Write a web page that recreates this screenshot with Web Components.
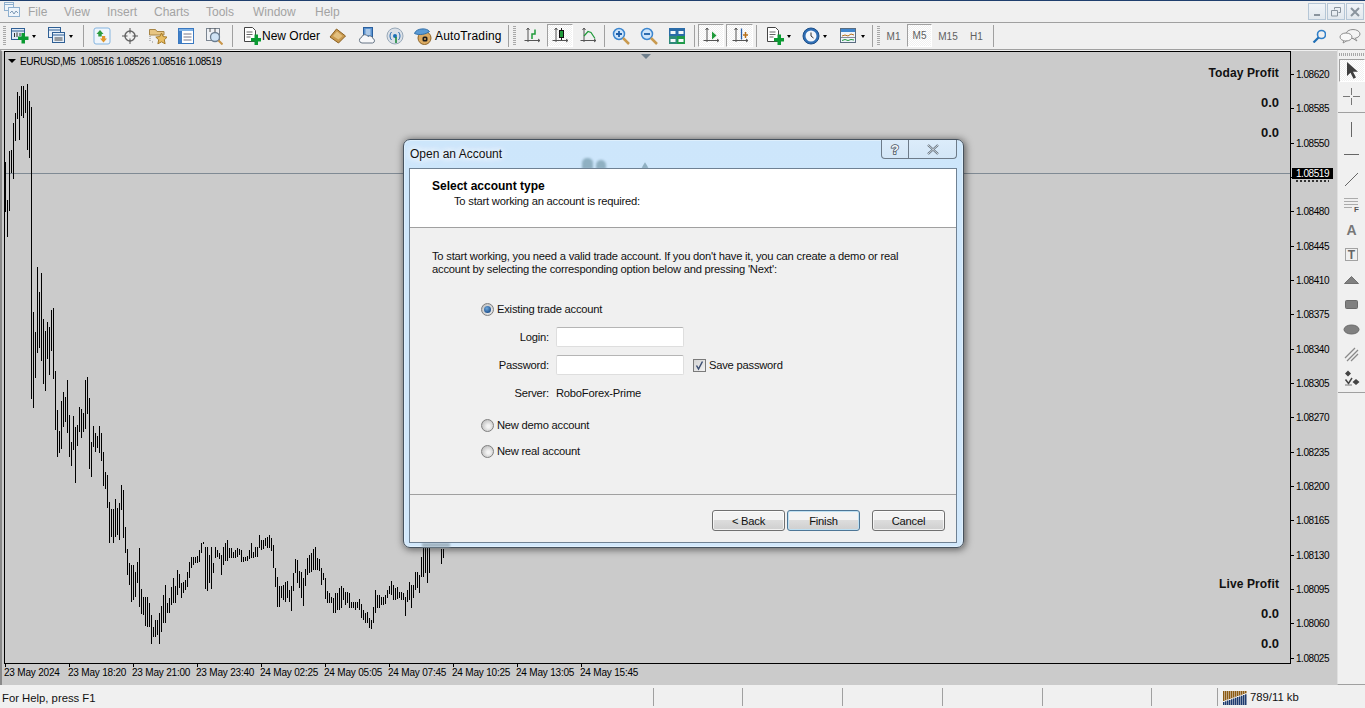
<!DOCTYPE html>
<html>
<head>
<meta charset="utf-8">
<title>Open an Account</title>
<style>
  html, body { margin: 0; padding: 0; }
  body {
    width: 1365px; height: 708px; overflow: hidden; position: relative;
    display: flex; flex-direction: column;
    background: #f0f0f0; color: #000;
    font: 12px "Liberation Sans", Arial, sans-serif;
  }
</style>
</head>
<body>
  <mt-menubar>
    <span>File</span><span>View</span><span>Insert</span><span>Charts</span><span>Tools</span><span>Window</span><span>Help</span>
  </mt-menubar>

  <mt-toolbar>
    <mt-grip w="8"></mt-grip>
    <mt-tool w="35" pad="3" icon="newchart" arrow></mt-tool>
    <mt-tool w="36" pad="5" icon="profiles" arrow></mt-tool>
    <mt-sep w="9"></mt-sep>
    <mt-tool w="28" icon="watch"></mt-tool>
    <mt-tool w="28" icon="navigator"></mt-tool>
    <mt-tool w="28" icon="folderstar"></mt-tool>
    <mt-tool w="28" icon="terminal"></mt-tool>
    <mt-tool w="28" icon="tester"></mt-tool>
    <mt-sep w="9"></mt-sep>
    <mt-tool w="86" pad="6" gap="1" icon="order">New Order</mt-tool>
    <mt-tool w="30" icon="market"></mt-tool>
    <mt-tool w="28" icon="cloud"></mt-tool>
    <mt-tool w="28" icon="signal"></mt-tool>
    <mt-tool w="97" pad="5" gap="3" track icon="auto">AutoTrading</mt-tool>
    <mt-sep w="5"></mt-sep>
    <mt-grip w="7"></mt-grip>
    <mt-tool w="28" icon="bars"></mt-tool>
    <mt-tool w="28" icon="candles" on></mt-tool>
    <mt-tool w="28" icon="line"></mt-tool>
    <mt-sep w="5"></mt-sep>
    <mt-tool w="28" icon="zoomin"></mt-tool>
    <mt-tool w="28" icon="zoomout"></mt-tool>
    <mt-tool w="28" icon="tile"></mt-tool>
    <mt-sep w="6"></mt-sep>
    <mt-tool w="28" icon="autoscroll" on></mt-tool>
    <mt-tool w="29" icon="shift" on></mt-tool>
    <mt-sep w="5"></mt-sep>
    <mt-tool w="38" pad="7" icon="indicators" arrow></mt-tool>
    <mt-tool w="37" pad="5" icon="clock" arrow></mt-tool>
    <mt-tool w="36" pad="6" icon="template" arrow></mt-tool>
    <mt-sep w="5"></mt-sep>
    <mt-grip w="6"></mt-grip>
    <mt-tool w="25" small>M1</mt-tool>
    <mt-tool w="27" small on>M5</mt-tool>
    <mt-tool w="30" small>M15</mt-tool>
    <mt-tool w="27" small>H1</mt-tool>
    <mt-sep w="6"></mt-sep>
    <mt-search-chat></mt-search-chat>
  </mt-toolbar>

  <mt-workspace>
    <mt-chart></mt-chart>
    <mt-drawbar></mt-drawbar>
  </mt-workspace>

  <mt-statusbar>For Help, press F1</mt-statusbar>

  <mt-dialog caption="Open an Account">
    <b slot="head">Select account type</b>
    <span slot="sub">To start working an account is required:</span>
    <span slot="intro">To start working, you need a valid trade account. If you don't have it, you can create a demo or real<br>account by selecting the corresponding option below and pressing 'Next':</span>
    <mt-radio slot="form" checked style="margin-top:23px">Existing trade account</mt-radio>
    <mt-field slot="form" label="Login:" style="margin-top:8px"><mt-input></mt-input></mt-field>
    <mt-field slot="form" label="Password:" style="margin-top:8px"><mt-input></mt-input><mt-check style="margin-left:9px">Save password</mt-check></mt-field>
    <mt-field slot="form" label="Server:" style="margin-top:8px">RoboForex-Prime</mt-field>
    <mt-radio slot="form" style="margin-top:12px">New demo account</mt-radio>
    <mt-radio slot="form" style="margin-top:6px">New real account</mt-radio>
    <mt-button slot="foot">&lt; Back</mt-button>
    <mt-button slot="foot" default style="margin-left:2px">Finish</mt-button>
    <mt-button slot="foot" style="margin-left:12px">Cancel</mt-button>
  </mt-dialog>

<script>
  const plus = (x, y) => `<path d="M${x - 1.5} ${y - 5}h3.5v3.5H${x + 5.5}v3.5H${x + 2}v3.5h-3.5v-3.5H${x - 5}v-3.5h3.5z" fill="#0a9a32"/>`;
  const axes = `<path d="M5 1v14M1.5 13.5H17" fill="none" stroke="#555"/><path d="M3.5 3 5 1l1.5 2M15 12l2 1.5-2 1.5" fill="none" stroke="#555"/>`;
  const doc = `<path d="M1.5.5h8l3 3v11h-11z" fill="#fff" stroke="#444"/><path d="M3.5 5h6M3.5 7.5h6M3.5 10h4" stroke="#666"/>`;

  const ICONS = {
    logo: `<rect x="1.5" y="1.5" width="9" height="8" fill="#eef4fa" stroke="#8fb0cf"/><rect x="5.5" y="6.5" width="11" height="9" fill="#eef4fa" stroke="#8fb0cf"/><path d="M7 12l2-2 2 3 2-3 2 2" fill="none" stroke="#7d99b5"/><path d="M2 3.5h8" stroke="#8fb0cf"/>`,
    newchart: `<rect x=".5" y="1.5" width="13" height="11" fill="#dfe9f5" stroke="#2f5f94"/><path d="M1 4h12" stroke="#2f5f94"/><path d="M3.5 6v4M6 5.5V10M9 6v3" stroke="#333"/>` + plus(12, 11),
    profiles: `<rect x=".5" y=".5" width="12" height="10" fill="#e6eff9" stroke="#2f5f94"/><rect x="4.5" y="5.5" width="12" height="10" fill="#e6eff9" stroke="#2f5f94"/><path d="M1 3h11M5 8h11" stroke="#2f5f94"/><path d="M6.5 11h8M6.5 13h8" stroke="#444"/>`,
    watch: `<rect x="1" y="1" width="16" height="16" rx="2" fill="#eef5fc" stroke="#85b5e0"/><path d="M7 3l3.5 4H8.7v2.5H5.3V7H3.5z" fill="#2c9c3f"/><path d="M10.5 15.5 7 11.5h2V9h3.2v2.5H14z" fill="#e0962c"/>`,
    navigator: `<circle cx="9" cy="9" r="5" fill="none" stroke="#666" stroke-width="1.4"/><path d="M9 1v5.5M9 11.5V17M1 9h5.5M11.5 9H17" stroke="#555"/>`,
    folderstar: `<path d="M.5 2.5h6l1.500 2h7v3.500H.5z" fill="#e7c583" stroke="#a88646"/><path d="M1 9v6M3 15h2" stroke="#888" stroke-dasharray="1 1"/><path d="M12.500 6l1.700 3.600 4 .5-2.900 2.700.8 4-3.600-2-3.600 2 .8-4-2.900-2.700 4-.5z" fill="#e8bd62" stroke="#a57a26"/>`,
    terminal: `<rect x="1.500" y="1.500" width="15" height="15" fill="#fff" stroke="#3a78c0"/><rect x="2" y="2" width="14" height="2" fill="#7fb2e5"/><rect x="2" y="4" width="3" height="12" fill="#3f7fc9"/><path d="M6.500 7h8M6.500 10h8M6.500 13h8" stroke="#778"/>`,
    tester: `<rect x="1.500" y="1.500" width="13" height="12" fill="#eef1f5" stroke="#7b8591"/><path d="M5 1v4M10 1v4" stroke="#555"/><circle cx="10" cy="10" r="4.500" fill="#cfe3f5" stroke="#6a7d90" stroke-width="1.300"/><path d="M13.500 13.500l4 4" stroke="#c9964a" stroke-width="2"/>`,
    order: doc + plus(13, 12.5),
    market: `<path d="M1 10 7.500 2l9 7-7 7z" fill="#c99a4f" stroke="#8a5f20"/><path d="M4 9l4-4.500 5.500 4.500-4 3.500z" fill="#e3c07f"/>`,
    cloud: `<rect x="5.500" y=".5" width="9" height="9" fill="#5b93d0" stroke="#2a5f9e"/><path d="M7.500 3h5M7.500 5h5M7.500 7h5" stroke="#fff"/><path d="M4 16a2.800 2.800 0 0 1-.5-5.500A3.500 3.500 0 0 1 10 9.500a3 3 0 0 1 4.800 2A2.300 2.300 0 0 1 14.500 16z" fill="#f7f8fa" stroke="#667585"/>`,
    signal: `<circle cx="9" cy="9" r="8" fill="#dbe1e8" stroke="#98a8b8"/><path d="M5.500 13a6 6 0 0 1 0-8M12.500 5a6 6 0 0 1 0 8" fill="none" stroke="#2b6cb0"/><circle cx="9" cy="9" r="2" fill="#1c6fb5"/><path d="M10 10v6" stroke="#1b8a3a" stroke-width="1.600"/>`,
    auto: `<circle cx="10.500" cy="11" r="6.500" fill="#dcab62" stroke="#8d6428"/><path d="M.5 6.500C2 1 13 .5 15.500 4.500 12 7.500 5 8.500.5 6.500z" fill="#5b9bd5" stroke="#2f6ea8"/><rect x="8.500" y="9.500" width="5" height="5" rx="1.500" fill="#1d1d1d"/><circle cx="11" cy="12" r="1" fill="#dcab62"/>`,
    bars: axes + `<path d="M9 12V7h3V2.500" fill="none" stroke="#1f9a3a" stroke-width="1.500"/>`,
    candles: axes + `<path d="M10.500 1v12" stroke="#222"/><rect x="8.500" y="3.500" width="4" height="7" fill="#1f9a3a" stroke="#111"/>`,
    line: axes + `<path d="M5 9 9 4.500l3 1 4 6" fill="none" stroke="#1f9a3a" stroke-width="1.200"/>`,
    zoomin: `<circle cx="7" cy="7" r="5.500" fill="#cfe5fa" stroke="#3c86cf" stroke-width="1.500"/><path d="M4 7h6M7 4v6" stroke="#1f5fa8" stroke-width="1.800"/><path d="M11 11l6 6" stroke="#c99a4f" stroke-width="2.500"/>`,
    zoomout: `<circle cx="7" cy="7" r="5.500" fill="#cfe5fa" stroke="#3c86cf" stroke-width="1.500"/><path d="M4 7h6" stroke="#1f5fa8" stroke-width="1.800"/><path d="M11 11l6 6" stroke="#c99a4f" stroke-width="2.500"/>`,
    tile: `<rect x="1" y="1" width="16" height="16" fill="#2b6ca8"/><rect x="9" y="9" width="8" height="8" fill="#1f9a4a"/><rect x="1" y="9" width="8" height="8" fill="#2f8a7a"/><rect x="2.500" y="4" width="5" height="3" fill="#f4f7fa"/><rect x="10.500" y="4" width="5" height="3" fill="#f4f7fa"/><rect x="2.500" y="12" width="5" height="3" fill="#f4f7fa"/><rect x="10.500" y="12" width="5" height="3" fill="#f4f7fa"/>`,
    autoscroll: axes + `<path d="M10 4.500l4.500 4-4.500 4z" fill="#1f9a3a"/>`,
    shift: axes + `<path d="M10.500 1.500v11" stroke="#2a5fa8" stroke-width="1.300"/><path d="M14.500 5v6M12 8h5" stroke="#b8701a" stroke-width="1.500"/>`,
    indicators: doc + plus(13, 12.5),
    clock: `<circle cx="9" cy="9" r="8" fill="#2f6fb5" stroke="#1d4f8a"/><circle cx="9" cy="9" r="5.500" fill="#f4f7fb"/><path d="M9 5.500V9l2.500 2" fill="none" stroke="#333"/>`,
    template: `<rect x=".5" y="1.500" width="15" height="14" fill="#eef4fb" stroke="#5a6d80"/><rect x="1" y="2" width="14" height="3" fill="#3f86cf"/><path d="M2 9l3-1 3 1 3-2 3 1" fill="none" stroke="#b8701a"/><path d="M1 10.500h14" stroke="#889"/><path d="M2 13.500l3-1 3 1 3-1 3 .5" fill="none" stroke="#1f9a3a"/>`,
    search: `<circle cx="9.500" cy="5.500" r="4" fill="none" stroke="#2f7fc9" stroke-width="1.600"/><path d="M6.500 8.500l-5 5" stroke="#1f6fb5" stroke-width="2.200"/>`,
    chat: `<ellipse cx="14" cy="6" rx="7" ry="4.500" fill="#f4f4f4" stroke="#8d8d8d"/><path d="M16 10l2 3-4-2.500" fill="#f4f4f4" stroke="#8d8d8d"/><ellipse cx="7" cy="9" rx="6" ry="4" fill="#f8f8f8" stroke="#8d8d8d"/><path d="M5 12.500l-1 2.500 3.500-2" fill="#f8f8f8" stroke="#8d8d8d"/>`,
    cursor: `<path d="M4 1v14l3.500-3.200 3 6 2.500-1.200-3-5.800H15z" fill="#3f3f3f"/>`,
    cross: `<path d="M9.500 1v7M9.500 11v7M1 9.500h7M11 9.500h7" stroke="#777"/>`,
    vline: `<path d="M9.500 2v15" stroke="#666"/>`,
    hline: `<path d="M2 9.500h15" stroke="#666"/>`,
    trend: `<path d="M3 16 16 3" stroke="#666"/>`,
    fibo: `<path d="M2.500 3.500h14M2.500 6.500h14M2.500 9.500h14M2.500 12.500h8" stroke="#666" stroke-dasharray="1 1"/><text x="12" y="17" font-size="8" font-weight="700" font-family="Liberation Sans" fill="#555">F</text>`,
    alabel: `<text x="9.500" y="15" text-anchor="middle" font-size="14" font-family="Liberation Sans" font-weight="700" fill="#777">A</text>`,
    tlabel: `<rect x="3.500" y="3.500" width="12" height="12" fill="none" stroke="#555" stroke-dasharray="1 1"/><text x="9.500" y="14" text-anchor="middle" font-size="12" font-weight="700" font-family="Liberation Sans" fill="#666">T</text>`,
    triangle: `<path d="M2.500 13.500 9.500 6.500l7 7z" fill="#808080" stroke="#707070"/>`,
    rectangle: `<rect x="3.500" y="5.500" width="12" height="8" rx="1" fill="#808080" stroke="#6a6a6a"/>`,
    ellipse: `<ellipse cx="9.500" cy="9.500" rx="7.500" ry="4.500" fill="#808080" stroke="#6a6a6a"/>`,
    hatch: `<path d="M3 13 13 3M5 16 16 5M9 16l7-7" stroke="#8a8a8a" stroke-width="1.300"/>`,
    arrows: `<path d="M6 .5l3 3-3 3-3-3zM14 9l3.500 3-3.500 3-3.500-3z" fill="#444"/><path d="M3.500 9.500l3 4 3.500-5.500" fill="none" stroke="#444" stroke-width="1.500"/><path d="M3 15h7" stroke="#777"/>`
  };

  class Icon extends HTMLElement {
    connectedCallback() {
      const size = this.getAttribute("size") || 18;
      const vb = this.getAttribute("vb") || "0 0 18 18";
      this.attachShadow({ mode: "open" }).innerHTML = `
        <style>:host { display: inline-flex; flex: none; } svg { display: block; }</style>
        <svg xmlns="http://www.w3.org/2000/svg" width="${size}" height="${this.getAttribute("h") || size}" viewBox="${vb}">${ICONS[this.getAttribute("name")] || ""}</svg>`;
    }
  }

  class MenuBar extends HTMLElement {
    constructor() {
      super();
      this.attachShadow({ mode: "open" }).innerHTML = `
        <style>
          :host {
            display: grid; flex: none; box-sizing: border-box; height: 23px;
            grid-template-columns: 28px 36px 43px 47px 52px 47px 62px 40px 1fr auto;
            align-items: center; background: #f0f0f0; color: #a3a3a3;
            border-top: 1px solid #1f3f6e; border-bottom: 1px solid #a0a0a0;
            font-size: 12px;
          }
          .logo { padding-left: 3px; }
          .win { grid-column: 10; display: flex; gap: 1px; padding-right: 1px; }
          .win i {
            display: flex; align-items: center; justify-content: center; width: 18px; height: 17px;
            box-sizing: border-box; border: 1px solid #b5c6d6; background: linear-gradient(#f0f4f8, #e2e8ee);
          }
        </style>
        <div class="logo"><mt-icon name="logo"></mt-icon></div>
        <slot></slot>
        <div class="win">
          <i><svg width="10" height="10"><rect x="2" y="7" width="6" height="2" fill="#8a949e"/></svg></i>
          <i><svg width="10" height="10"><path d="M3.500 2.500V.5h6v5h-2M.5 3.500h6v5.500h-6z" fill="none" stroke="#8a949e"/></svg></i>
          <i><svg width="10" height="10"><path d="M1 1l8 8M9 1 1 9" stroke="#8a949e" stroke-width="2"/></svg></i>
        </div>`;
    }
  }

  class ToolBar extends HTMLElement {
    constructor() {
      super();
      this.attachShadow({ mode: "open" }).innerHTML = `
        <style>
          :host {
            display: flex; flex: none; box-sizing: border-box; height: 27px;
            background: #f0f0f0; border-bottom: 1px solid #a0a0a0;
            align-items: stretch;
          }
        </style>
        <slot></slot>`;
    }
  }

  class Tool extends HTMLElement {
    connectedCallback() {
      const pad = this.getAttribute("pad");
      const icon = this.getAttribute("icon");
      this.attachShadow({ mode: "open" }).innerHTML = `
        <style>
          :host { display: block; flex: none; width: ${this.getAttribute("w")}px; font-size: 12px; color: #000; }
          :host([small]) { font-size: 10px; color: #606060; }
          :host([track]) .t { letter-spacing: .16px; }
          .b {
            display: flex; align-items: center; height: 100%; box-sizing: border-box;
            justify-content: ${pad ? "flex-start" : "center"};
            padding-left: ${pad || 0}px;
          }
          :host([on]) .b {
            height: 23px; margin: 1px 1px 0;
            border: 1px solid; border-color: #a0a0a0 #fff #fff #a0a0a0;
            background: repeating-conic-gradient(#fff 0 25%, #f0f0f0 0 50%) 0 0 / 2px 2px;
          }
          .t { margin-left: ${this.getAttribute("gap") || 0}px; white-space: nowrap; }
          .a { width: 0; height: 0; margin-left: 3px; border: 3px solid transparent; border-top: 3px solid #000; border-bottom: 0; border-left-width: 2.5px; border-right-width: 2.5px; }
        </style>
        <div class="b">
          ${icon ? `<mt-icon name="${icon}"></mt-icon>` : ""}
          <span class="t"><slot></slot></span>
          ${this.hasAttribute("arrow") ? '<i class="a"></i>' : ""}
        </div>`;
    }
  }

  class Sep extends HTMLElement {
    connectedCallback() {
      this.attachShadow({ mode: "open" }).innerHTML = `
        <style>
          :host { display: flex; flex: none; width: ${this.getAttribute("w")}px; justify-content: center; align-items: center; }
          i { width: 1px; height: 22px; background: #a0a0a0; }
        </style><i></i>`;
    }
  }

  class Grip extends HTMLElement {
    connectedCallback() {
      this.attachShadow({ mode: "open" }).innerHTML = `
        <style>
          :host { display: flex; flex: none; width: ${this.getAttribute("w")}px; justify-content: center; align-items: center; }
          i { width: 3px; height: 20px; background: repeating-linear-gradient(#a8a8a8 0 1px, transparent 1px 2px); }
        </style><i></i>`;
    }
  }

  class SearchChat extends HTMLElement {
    constructor() {
      super();
      this.attachShadow({ mode: "open" }).innerHTML = `
        <style>
          :host { display: flex; flex: 1; justify-content: flex-end; align-items: center; padding-right: 4px; gap: 13px; }
        </style>
        <mt-icon name="search" size="14" h="14" vb="0 0 14 14"></mt-icon>
        <mt-icon name="chat" size="22" h="16" vb="0 0 22 16"></mt-icon>`;
    }
  }

  class WorkSpace extends HTMLElement {
    constructor() {
      super();
      this.attachShadow({ mode: "open" }).innerHTML = `
        <style>:host { display: flex; flex: 1; min-height: 0; }</style>
        <slot></slot>`;
    }
  }

  // bars as [first top, first bottom, second top, ...], every second pixel, in 3x crop units
  const TOP_BARS = [336,485, 450,560, 302,482, 300,370, 220,387, 188,272, 125,207, 137,270, 108,197, 108,203, 120,190, 102,300, 152,323];
  const MID_BARS = [0,476, 216,503, 276,414, 82,338, 155,323, 100,362, 238,431, 272,452, 247,356, 262,404, 210,332, 205,416, 394,570, 510,650, 573,638, 483,626, 457,560, 471,545, 420,578, 525,650, 606,677, 528,630, 560,730, 555,617, 501,575, 507,593, 518,575, 420,567, 412,521, 474,686, 606,710, 558,622, 579,635, 588,625, 558,638, 579,662, 636,737, 696,746, 705,803, 786,909, 807,891, 807,909, 778,891, 804,885, 790,900, 735,810, 750,894];
  const LOW_BARS = [20,98, 87,165, 130,195, 135,245, 135,240, 155,230, 125,190, 85,260, 207,283, 230,285, 230,318, 232,320, 250,320, 285,372, 320,350, 300,350, 300,345, 280,372, 258,335, 225,310, 195,310, 250,280, 235,280, 200,255, 175,250, 197,248, 150,225, 163,205, 190,233, 185,218, 180,210, 155,200, 125,175, 112,145, 110,135, 110,130, 108,128, 90,125, 70,100, 65,73, 82,207, 82,212, 105,190, 80,207, 130,160, 80,115, 90,110, 100,118, 105,165, 82,135, 70,122, 60,122, 85,115, 85,115, 95,115, 90,115, 85,110, 88,105, 90,125, 112,125, 110,122, 108,122, 90,118, 70,115, 95,115, 82,112, 80,110, 45,85, 60,90, 60,88, 55,78, 50,85, 45,85, 55,92, 75,143, 143,200, 170,260, 197,260, 197,235, 195,240, 185,245, 183,235, 210,245, 197,272, 160,212, 117,160, 120,190, 153,205, 155,235, 175,257, 148,197, 115,165, 105,160, 100,155, 87,150, 82,150, 115,150, 117,152, 143,195, 160,180, 175,238, 213,250, 220,250, 230,250, 235,280, 220,278, 218,270, 205,270, 198,265, 203,240, 217,255, 215,250, 218,265, 245,265, 245,265, 245,270, 245,265, 237,270, 252,295, 270,300, 280,310, 275,310, 295,325, 300,327, 260,310, 210,278, 225,265, 225,265, 230,255, 232,255, 225,253, 210,235, 197,222, 183,225, 195,240, 205,240, 200,237, 215,235, 215,240, 220,240, 232,287, 210,245, 185,240, 195,265, 195,235, 155,210, 155,205, 165,220, 110,172, 85,170, 85,160, 85,190, 85,160];

  function barPath() {
    let d = "";
    const add = (list, x0, base) => {
      for (let i = 0; i < list.length; i += 2) {
        const x = x0 + i + 0.5;
        d += `M${x} ${Math.round(base + list[i] / 3)}V${Math.round(base + list[i + 1] / 3)}`;
      }
    };
    add(TOP_BARS, 5, 50);
    add(MID_BARS, 31, 240);
    add(LOW_BARS, 125, 520);
    d += "M31.500 107V240M441.500 549V564M443.500 549V558";
    return d;
  }

  // 1.08515 lies under the current price box, only a sliver of it shows
  const PRICES = ["1.08620", "1.08585", "1.08550", "", "1.08480", "1.08445", "1.08410", "1.08375", "1.08340", "1.08305", "1.08270", "1.08235", "1.08200", "1.08165", "1.08130", "1.08095", "1.08060", "1.08025"];
  const DATES = ["23 May 2024", "23 May 18:20", "23 May 21:00", "23 May 23:40", "24 May 02:25", "24 May 05:05", "24 May 07:45", "24 May 10:25", "24 May 13:05", "24 May 15:45"];

  class Chart extends HTMLElement {
    constructor() {
      super();
      this.attachShadow({ mode: "open" }).innerHTML = `
        <style>
          :host {
            display: grid; flex: 1; min-width: 0; box-sizing: border-box;
            grid-template-columns: 1287px 1fr; grid-template-rows: 613px 1fr;
            background: #cbcbcb; padding-left: 2px;
            border-left: 2px solid #8a8a8a; border-top: 1px solid #f0f0f0;
            font-size: 10px; color: #000;
          }
          .plot {
            position: relative; box-sizing: border-box; border: 1px solid #000;
            display: flex; flex-direction: column; justify-content: space-between;
            padding: 6px 11px 4px 0; align-items: stretch;
          }
          svg.bars { position: absolute; left: 0; top: 0; }
          .row { position: relative; display: flex; justify-content: space-between; align-items: flex-start; }
          .legend { display: flex; align-items: center; margin: -2px 0 0 3px; height: 10px; white-space: pre; letter-spacing: -.38px; }
          .legend i { width: 0; height: 0; margin-right: 4px; border: 4px solid transparent; border-top: 4px solid #000; border-bottom: 0; }
          .end { justify-content: flex-end; }
          .mark { position: absolute; left: 636px; top: 2px; width: 0; height: 0; border: 5px solid transparent; border-top: 5px solid #6f7f8c; border-bottom: 0; }
          .axis { position: relative; padding-top: 6.3px; letter-spacing: -.45px; }
          .axis div { display: flex; align-items: center; height: 34.35px; }
          .axis div::before { content: ""; width: 3px; height: 1px; background: #000; margin-right: 2px; }
          .axis s { display: block; width: 33px; height: 2px; margin-top: 6px; background: repeating-linear-gradient(90deg, #333 0 2px, transparent 2px 4px); }
          .now {
            position: absolute; left: 1px; top: 117px; width: 41px; height: 11px; line-height: 11px;
            background: #000; color: #fff; text-align: center;
          }
          .dates { display: flex; grid-column: 1 / 3; }
          .dates span {
            width: 64px; padding-top: 3px; white-space: nowrap; letter-spacing: -.2px;
            background: linear-gradient(#000, #000) 1px 0 / 1px 3px no-repeat;
          }
        </style>
        <div class="plot">
          <svg class="bars" width="1285" height="611" viewBox="5 52 1285 611" shape-rendering="crispEdges">
            <path d="M5 173.500H1290" stroke="#7f8a94" fill="none"/>
            <path d="${barPath()}" stroke="#000" fill="none"/>
          </svg>
          <i class="mark"></i>
          <div class="row">
            <div class="legend"><i></i>EURUSD,M5  1.08516 1.08526 1.08516 1.08519</div>
            <mt-profit title="Today Profit"></mt-profit>
          </div>
          <div class="row end"><mt-profit title="Live Profit"></mt-profit></div>
        </div>
        <div class="axis">
          ${PRICES.map(p => `<div>${p || "<s></s>"}</div>`).join("")}
          <span class="now">1.08519</span>
        </div>
        <div class="dates">${DATES.map(d => `<span>${d}</span>`).join("")}</div>`;
    }
  }

  class Profit extends HTMLElement {
    connectedCallback() {
      this.attachShadow({ mode: "open" }).innerHTML = `
        <style>
          :host { display: block; position: relative; text-align: right; color: #111; font-weight: 700; }
          div { height: 30px; line-height: 30px; font-size: 13px; }
          .t { font-size: 12px; letter-spacing: .12px; }
        </style>
        <div class="t">${this.getAttribute("title")}</div><div>0.0</div><div>0.0</div>`;
      this.removeAttribute("title");
    }
  }

  const DRAW = [["cursor", 1], ["cross"], [0], ["vline"], ["hline"], ["trend"], ["fibo"], ["alabel"], ["tlabel"], ["triangle"], ["rectangle"], ["ellipse"], ["hatch"], ["arrows"]];

  class DrawBar extends HTMLElement {
    constructor() {
      super();
      const cells = DRAW.map(([name, on]) => name
        ? `<div class="c${on ? " on" : ""}"><mt-icon name="${name}" size="19" h="19" vb="0 0 19 19"></mt-icon></div>`
        : '<hr>').join("");
      this.attachShadow({ mode: "open" }).innerHTML = `
        <style>
          :host {
            display: flex; flex-direction: column; flex: none; width: 28px; box-sizing: border-box;
            background: #f0f0f0; border-left: 1px solid #e0e0e0; border-bottom: 1px solid #a0a0a0;
          }
          .grip { height: 3px; margin: 3px 1px 3px; background: repeating-linear-gradient(90deg, #a8a8a8 0 1px, transparent 1px 2px); }
          .c { display: flex; align-items: center; justify-content: center; height: 25px; flex: none; box-sizing: border-box; }
          .c.on {
            height: 23px; margin: 0 0 2px 1px; border: 1px solid; border-color: #a0a0a0 #fff #fff #a0a0a0;
            background: repeating-conic-gradient(#fff 0 25%, #f0f0f0 0 50%) 0 0 / 2px 2px;
          }
          hr { width: 100%; box-sizing: border-box; height: 1px; border: 0; background: #a0a0a0; margin: 3px 0 4px; flex: none; }
          hr.end { margin: 0; }
        </style>
        <div class="grip"></div>${cells}<hr class="end">`;
    }
  }

  class StatusBar extends HTMLElement {
    constructor() {
      super();
      let bars = "";
      for (let i = 0; i < 12; i++) {
        const x = i * 2 + 0.75;
        const low = 11 - i * 0.7;
        bars += `<path d="M${x} 1V${low}" stroke="#8b5a12" stroke-width="1.500"/><path d="M${x} ${low + 1}V15" stroke="#1c3a6e" stroke-width="1.500"/>`;
      }
      this.attachShadow({ mode: "open" }).innerHTML = `
        <style>
          :host {
            display: grid; flex: none; height: 23px;
            grid-template-columns: 653px 89px 100px 100px 100px 109px 66px 1fr;
            align-items: center; background: #f0f0f0; font-size: 11.300px; color: #111;
          }
          div { height: 18px; line-height: 18px; box-sizing: border-box; border-left: 1px solid #a0a0a0; display: flex; align-items: center; white-space: nowrap; }
          div.f { border: 0; padding: 2px 0 0 2px; }
          div.k { padding-top: 1px; }
          svg { margin: 0 3px 0 5px; }
        </style>
        <div class="f"><slot></slot></div>
        <div></div><div></div><div></div><div></div><div></div><div></div>
        <div class="k"><svg width="24" height="15">${bars}</svg>789/11 kb</div>`;
    }
  }

  class Dialog extends HTMLElement {
    connectedCallback() {
      this.attachShadow({ mode: "open" }).innerHTML = `
        <style>
          :host {
            position: absolute; left: 403px; top: 139px; width: 561px; height: 409px;
            display: block; box-sizing: border-box;
            background: linear-gradient(#cde6fb, #d2e8fb);
            border: 1px solid #46525e; border-radius: 7px;
            box-shadow: 0 0 0 1px rgba(255,255,255,.35) inset, 1px 1px 7px 1px rgba(20,20,20,.55);
            font-size: 11.200px; letter-spacing: -.22px; color: #111;
          }
          .inner { position: absolute; left: 5px; top: 28px; right: 6px; bottom: 4px; display: flex; flex-direction: column; border: 1px solid #6f8193; background: #f0f0f0; }
          .cap { position: absolute; left: 6px; top: 6px; font-size: 12px; letter-spacing: 0; line-height: 16px; text-shadow: 0 0 6px #fff, 0 0 8px #fff, 0 0 10px #fff; }
          .btns { position: absolute; right: 6px; top: 0; display: flex; height: 18px; border: 1px solid #6d7b89; border-top: 0; border-radius: 0 0 4px 4px; background: linear-gradient(#dcecfa, #d3e6f7); }
          .btns span { display: flex; align-items: center; justify-content: center; }
          .btns .q { width: 26px; border-right: 1px solid #6d7b89; font: 700 13px "Liberation Sans", Arial, sans-serif; letter-spacing: 0; color: #f4f7fa; -webkit-text-stroke: 1.500px #46525e; paint-order: stroke fill; }
          .btns .x { width: 47px; }
          .ghost { position: absolute; background: #8fb0c2; filter: blur(1px); }
          .head { height: 58px; background: #fff; border-bottom: 1px solid #a0a0a0; padding-left: 22px; flex: none; }
          .head .h { padding-top: 10px; line-height: 15px; font-size: 12px; letter-spacing: 0; color: #000; }
          .head .s { padding-left: 22px; line-height: 15px; }
          .body { flex: 1; padding: 22px 0 0 22px; }
          .intro { line-height: 13px; }
          .form { display: flex; flex-direction: column; align-items: flex-start; padding-left: 49px; }
          .foot { display: flex; justify-content: flex-end; flex: none; border-top: 1px solid #a0a0a0; padding: 15px 11px 0 0; height: 32px; }
        </style>
        <i class="ghost" style="left:178px;top:18px;width:11px;height:11px;border-radius:5px 5px 0 0"></i>
        <i class="ghost" style="left:192px;top:20px;width:10px;height:9px;border-radius:5px 5px 0 0"></i>
        <i class="ghost" style="left:237px;top:22px;width:8px;height:7px;clip-path:polygon(50% 0,100% 100%,0 100%)"></i>
        <i class="ghost" style="left:18px;top:403px;width:28px;height:4px;background:#9fb3c0"></i>
        <div class="cap">${this.getAttribute("caption")}</div>
        <div class="btns">
          <span class="q">?</span>
          <span class="x"><svg width="14" height="11"><path d="M2 1l10 9M12 1 2 10" stroke="#5d6b78" stroke-width="2.200"/><path d="M2 1l10 9M12 1 2 10" stroke="#eef3f7" stroke-width=".8"/></svg></span>
        </div>
        <div class="inner">
          <div class="head">
            <div class="h"><slot name="head"></slot></div>
            <div class="s"><slot name="sub"></slot></div>
          </div>
          <div class="body">
            <div class="intro"><slot name="intro"></slot></div>
            <div class="form"><slot name="form"></slot></div>
          </div>
          <div class="foot"><slot name="foot"></slot></div>
        </div>`;
    }
  }

  class Radio extends HTMLElement {
    connectedCallback() {
      this.attachShadow({ mode: "open" }).innerHTML = `
        <style>
          :host { display: flex; align-items: center; height: 20px; white-space: nowrap; }
          i {
            display: flex; align-items: center; justify-content: center; flex: none;
            width: 13px; height: 13px; box-sizing: border-box; margin-right: 3px; border-radius: 50%;
            border: 1px solid #7f7f7f; background: radial-gradient(circle at 58% 58%, #f4f4f4 15%, #bababa 85%);
          }
          b { width: 7px; height: 7px; border-radius: 50%; background: radial-gradient(circle at 40% 35%, #6fa8dc, #1c4f8c 75%); }
        </style>
        <i>${this.hasAttribute("checked") ? "<b></b>" : ""}</i><slot></slot>`;
    }
  }

  class Field extends HTMLElement {
    connectedCallback() {
      this.attachShadow({ mode: "open" }).innerHTML = `
        <style>
          :host { display: flex; align-items: center; min-height: 20px; white-space: nowrap; }
          label { width: 68px; margin-right: 7px; text-align: right; flex: none; }
        </style>
        <label>${this.getAttribute("label")}</label><slot></slot>`;
    }
  }

  class Input extends HTMLElement {
    constructor() {
      super();
      this.attachShadow({ mode: "open" }).innerHTML = `
        <style>
          :host {
            display: block; width: 128px; height: 20px; box-sizing: border-box; background: #fff;
            border: 1px solid #dedede; border-top-color: #b5b5b5; border-radius: 2px;
          }
        </style>`;
    }
  }

  class Check extends HTMLElement {
    constructor() {
      super();
      this.attachShadow({ mode: "open" }).innerHTML = `
        <style>
          :host { display: flex; align-items: center; white-space: nowrap; }
          i {
            display: block; flex: none; width: 13px; height: 13px; margin-right: 3px; box-sizing: border-box;
            border: 1px solid #7a7a7a; background: linear-gradient(135deg, #d4d4d4, #f2f2f2);
          }
          svg { display: block; }
        </style>
        <i><svg width="11" height="11"><path d="M2.500 5.500 4.500 9 8.500 1.500" fill="none" stroke="#3c4f73" stroke-width="1.500"/></svg></i><slot></slot>`;
    }
  }

  class Button extends HTMLElement {
    constructor() {
      super();
      this.attachShadow({ mode: "open" }).innerHTML = `
        <style>
          :host {
            display: flex; align-items: center; justify-content: center; flex: none;
            width: 73px; height: 21px; box-sizing: border-box; border: 1px solid #707070; border-radius: 3px;
            background: linear-gradient(#f3f3f3 0 48%, #dcdcdc 50%, #cfcfcf);
            box-shadow: inset 0 0 0 1px rgba(255,255,255,.7);
            color: #111;
          }
          :host([default]) { border-color: #4d7696; box-shadow: inset 0 0 0 1px #bfe0f2; }
        </style>
        <slot></slot>`;
    }
  }

  customElements.define("mt-icon", Icon);
  customElements.define("mt-menubar", MenuBar);
  customElements.define("mt-toolbar", ToolBar);
  customElements.define("mt-tool", Tool);
  customElements.define("mt-sep", Sep);
  customElements.define("mt-grip", Grip);
  customElements.define("mt-search-chat", SearchChat);
  customElements.define("mt-workspace", WorkSpace);
  customElements.define("mt-chart", Chart);
  customElements.define("mt-profit", Profit);
  customElements.define("mt-drawbar", DrawBar);
  customElements.define("mt-statusbar", StatusBar);
  customElements.define("mt-dialog", Dialog);
  customElements.define("mt-radio", Radio);
  customElements.define("mt-field", Field);
  customElements.define("mt-input", Input);
  customElements.define("mt-check", Check);
  customElements.define("mt-button", Button);
</script>
</body>
</html>
